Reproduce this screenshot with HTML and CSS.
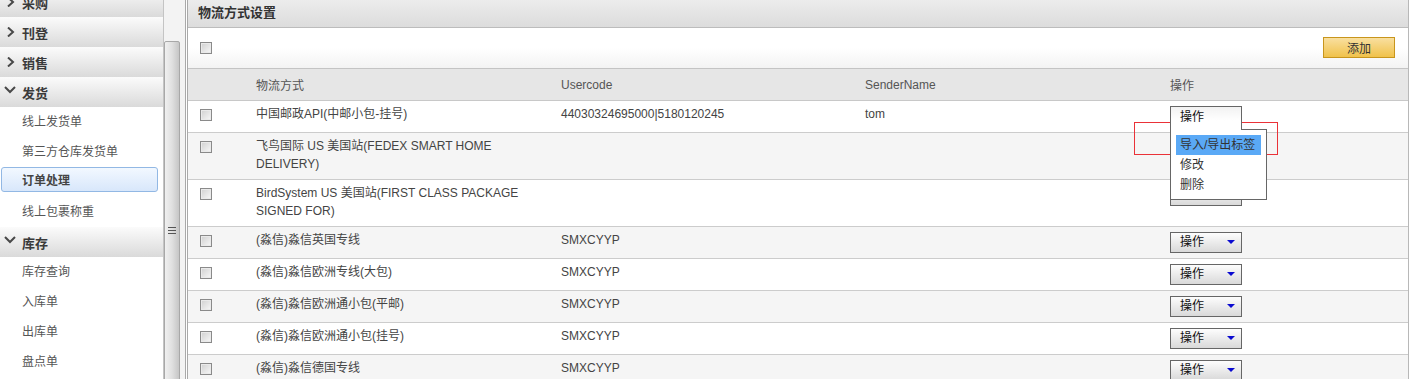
FILE: index.html
```html
<!DOCTYPE html>
<html lang="zh-CN">
<head>
    <meta charset="UTF-8">
    <title>物流方式设置</title>
    <link rel="stylesheet" href="styles.css">
</head>
<body>
    <div class="page">
        <!-- 左侧菜单 -->
        <aside class="sidebar">
            <ul class="menu">
                <li class="group"><svg class="arrow" viewBox="0 0 10 10"><polyline points="2,0.5 7,5 2,9.5"/></svg>采购</li>
                <li class="group"><svg class="arrow" viewBox="0 0 10 10"><polyline points="2,0.5 7,5 2,9.5"/></svg>刊登</li>
                <li class="group"><svg class="arrow" viewBox="0 0 10 10"><polyline points="2,0.5 7,5 2,9.5"/></svg>销售</li>
                <li class="group open"><svg class="arrow" viewBox="0 0 12 10"><polyline points="1,2 6,7 11,2"/></svg>发货</li>
                <li class="item">线上发货单</li>
                <li class="item">第三方仓库发货单</li>
                <li class="item active">订单处理</li>
                <li class="item">线上包裹称重</li>
                <li class="group open"><svg class="arrow" viewBox="0 0 12 10"><polyline points="1,2 6,7 11,2"/></svg>库存</li>
                <li class="item">库存查询</li>
                <li class="item">入库单</li>
                <li class="item">出库单</li>
                <li class="item">盘点单</li>
            </ul>
        </aside>

        <!-- 滚动条 -->
        <div class="scroll">
            <div class="thumb"><span class="grip"></span></div>
        </div>

        <!-- 主内容 -->
        <main class="main">
            <div class="panel-title">物流方式设置</div>
            <div class="toolbar">
                <span class="chk"></span>
                <button class="btn-add">添加</button>
            </div>
            <table class="grid">
                <colgroup>
                    <col class="c-chk">
                    <col class="c-name">
                    <col class="c-code">
                    <col class="c-sender">
                    <col>
                </colgroup>
                <thead>
                    <tr>
                        <th></th>
                        <th>物流方式</th>
                        <th>Usercode</th>
                        <th>SenderName</th>
                        <th>操作</th>
                    </tr>
                </thead>
                <tbody>
                    <tr>
                        <td><span class="chk"></span></td>
                        <td>中国邮政API(中邮小包-挂号)</td>
                        <td>44030324695000|5180120245</td>
                        <td>tom</td>
                        <td>
                            <div class="op-wrap">
                                <div class="op-open">操作</div>
                                <div class="op-menu">
                                    <div class="op-item hover">导入/导出标签</div>
                                    <div class="op-item">修改</div>
                                    <div class="op-item">删除</div>
                                </div>
                            </div>
                        </td>
                    </tr>
                    <tr>
                        <td><span class="chk"></span></td>
                        <td>飞鸟国际 US 美国站(FEDEX SMART HOME DELIVERY)</td>
                        <td></td>
                        <td></td>
                        <td><div class="op covered"></div></td>
                    </tr>
                    <tr>
                        <td><span class="chk"></span></td>
                        <td>BirdSystem US 美国站(FIRST CLASS PACKAGE SIGNED FOR)</td>
                        <td></td>
                        <td></td>
                        <td><div class="op covered"></div></td>
                    </tr>
                    <tr>
                        <td><span class="chk"></span></td>
                        <td>(淼信)淼信英国专线</td>
                        <td>SMXCYYP</td>
                        <td></td>
                        <td><div class="op">操作<i class="caret"></i></div></td>
                    </tr>
                    <tr>
                        <td><span class="chk"></span></td>
                        <td>(淼信)淼信欧洲专线(大包)</td>
                        <td>SMXCYYP</td>
                        <td></td>
                        <td><div class="op">操作<i class="caret"></i></div></td>
                    </tr>
                    <tr>
                        <td><span class="chk"></span></td>
                        <td>(淼信)淼信欧洲通小包(平邮)</td>
                        <td>SMXCYYP</td>
                        <td></td>
                        <td><div class="op">操作<i class="caret"></i></div></td>
                    </tr>
                    <tr>
                        <td><span class="chk"></span></td>
                        <td>(淼信)淼信欧洲通小包(挂号)</td>
                        <td>SMXCYYP</td>
                        <td></td>
                        <td><div class="op">操作<i class="caret"></i></div></td>
                    </tr>
                    <tr>
                        <td><span class="chk"></span></td>
                        <td>(淼信)淼信德国专线</td>
                        <td>SMXCYYP</td>
                        <td></td>
                        <td><div class="op">操作<i class="caret"></i></div></td>
                    </tr>
                </tbody>
            </table>
        </main>

        <!-- 标注框 -->
        <div class="mark"></div>
    </div>
</body>
</html>
```

FILE: styles.css
```css
/* 重置 */
* {
    margin: 0;
    padding: 0;
    box-sizing: border-box;
}

body {
    font-family: "Liberation Sans", "Noto Sans CJK SC", sans-serif;
    font-size: 12px;
    color: #444;
    background: #fff;
}

.page {
    display: flex;
    width: 1410px;
    height: 379px;
    overflow: hidden;
    position: relative;
}

/* 左侧菜单 */
.sidebar {
    width: 164px;
    flex: none;
    border-right: 1px solid #c4c4c4;
    overflow: hidden;
}

.menu {
    list-style: none;
    margin-top: -13px;
}

.menu .group {
    height: 30px;
    display: flex;
    align-items: center;
    padding-left: 22px;
    position: relative;
    font-size: 13px;
    font-weight: bold;
    color: #3a3a3a;
    background: linear-gradient(#fbfbfb, #dadada);
}

.menu .group .arrow {
    position: absolute;
    left: 6px;
    top: 10px;
    width: 10px;
    height: 10px;
    fill: none;
    stroke: #484848;
    stroke-width: 2;
}

.menu .group.open .arrow {
    left: 4px;
    top: 8px;
    width: 12px;
}

.menu .item {
    height: 30px;
    line-height: 30px;
    padding-left: 22px;
    color: #555;
}

.menu .item.active {
    height: 25px;
    line-height: 27px;
    margin: 0 5px 5px 1px;
    padding-left: 20px;
    border: 1px solid #92b8e4;
    border-radius: 3px;
    background: linear-gradient(#f2f8ff, #d8e7fb);
    font-weight: bold;
    color: #444;
}

/* 滚动条 */
.scroll {
    width: 21px;
    flex: none;
    background: #f3f3f3;
    padding-top: 41px;
}

.thumb {
    width: 16px;
    height: 400px;
    border: 1px solid #a8a8a8;
    border-radius: 2px 2px 0 0;
    background: linear-gradient(to right, #f0f0f0, #e0e0e0 50%, #c6c6c6);
    padding-top: 185px;
}

.grip {
    display: block;
    width: 8px;
    height: 7px;
    margin-left: 3px;
    border-top: 1px solid #555;
    border-bottom: 1px solid #555;
    background: linear-gradient(transparent 2px, #555 2px, #555 3px, transparent 3px);
}

/* 主内容 */
.main {
    flex: 1;
    border-left: 3px double #a9a9a9;
    border-right: 1px solid #b8b8b8;
    margin-right: 1px;
}

.panel-title {
    height: 28px;
    line-height: 26px;
    padding-left: 10px;
    font-size: 13px;
    font-weight: bold;
    color: #333;
    background: linear-gradient(#ececec, #dcdcdc);
    border-bottom: 1px solid #bcbcbc;
}

.toolbar {
    height: 41px;
    display: flex;
    align-items: center;
    justify-content: space-between;
    padding: 0 13px 1px 12px;
    background: linear-gradient(#fff 50%, #f3f3f3);
    border-bottom: 1px solid #c4c4c4;
}

.btn-add {
    width: 72px;
    height: 21px;
    font-family: inherit;
    font-size: 12px;
    color: #333;
    border: 1px solid #c8951c;
    background: linear-gradient(#f9dfa0, #f0c24a);
}

.chk {
    display: block;
    width: 12px;
    height: 12px;
    border: 1px solid #8a8a8a;
    background: linear-gradient(135deg, #d0d0d0, #f8f8f8);
    box-shadow: inset 0 0 0 1px #eaeaea;
}

/* 表格 */
.grid {
    width: 100%;
    border-collapse: collapse;
    table-layout: fixed;
}

.grid .c-chk { width: 58px; }
.grid .c-name { width: 305px; }
.grid .c-code { width: 304px; }
.grid .c-sender { width: 305px; }

.grid th {
    height: 31px;
    padding: 1px 10px 0;
    text-align: left;
    font-weight: normal;
    color: #555;
    background: #e6e6e6;
    border-bottom: 1px solid #c8c8c8;
}

.grid td {
    vertical-align: top;
    padding: 4px 30px 6px 10px;
    line-height: 18px;
    border-bottom: 1px solid #cccccc;
}

.grid td:first-child {
    padding-left: 12px;
}

.grid td .chk {
    margin-top: 4px;
}

.grid tbody tr:nth-child(even) td {
    background: #f5f5f5;
}

/* 操作按钮 */
.op {
    width: 72px;
    height: 21px;
    display: flex;
    align-items: center;
    justify-content: space-between;
    margin-top: 1px;
    margin-bottom: -1px;
    padding: 0 6px 0 9px;
    color: #111;
    border: 1px solid #666;
    background: linear-gradient(#fdfdfd, #d9d9d9);
}

.caret {
    width: 0;
    height: 0;
    border-left: 4px solid transparent;
    border-right: 4px solid transparent;
    border-top: 4px solid #0a0ad0;
}

.op-wrap {
    position: relative;
    width: 72px;
    height: 21px;
    margin-top: 1px;
    margin-bottom: -1px;
}

.op-open {
    position: relative;
    z-index: 3;
    width: 72px;
    height: 24px;
    padding: 1px 0 0 9px;
    color: #111;
    border: 1px solid #666;
    border-bottom: none;
    background: linear-gradient(#f2f2f2, #fff 60%);
}

.op-menu {
    position: absolute;
    z-index: 2;
    left: 0;
    top: 23px;
    width: 97px;
    height: 71px;
    padding: 5px 5px 0 5px;
    border: 1px solid #666;
    background: #fff;
}

.op-item {
    height: 20px;
    line-height: 20px;
    padding-left: 4px;
    color: #333;
}

.op-item.hover {
    background: #5aa9f6;
}

/* 标注 */
.mark {
    position: absolute;
    left: 1134px;
    top: 122px;
    width: 144px;
    height: 33px;
    border: 1px solid #ea3238;
    pointer-events: none;
}
```
